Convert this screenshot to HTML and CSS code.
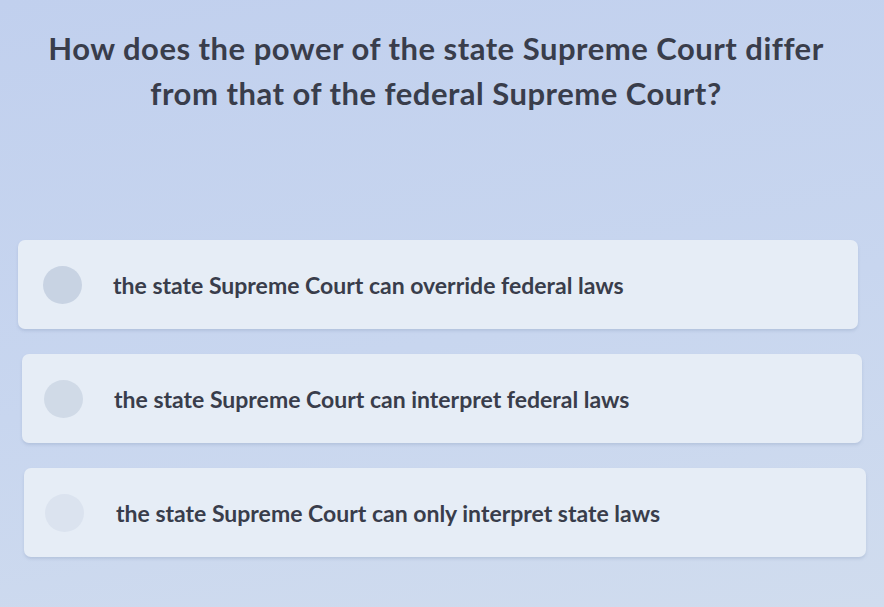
FILE: index.html
```html
<!DOCTYPE html>
<html>
<head>
<meta charset="UTF-8">
<title>Question</title>
<link rel="stylesheet" href="styles.css">
</head>
<body>
	<div class="page">
		<div class="question">
			<h1>How does the power of the state Supreme Court differ<br>from that of the federal Supreme Court?</h1>
		</div>
		<div class="answers">
			<div class="answer a1"><span class="radio"></span><span class="label">the state Supreme Court can override federal laws</span></div>
			<div class="answer a2"><span class="radio"></span><span class="label">the state Supreme Court can interpret federal laws</span></div>
			<div class="answer a3"><span class="radio"></span><span class="label">the state Supreme Court can only interpret state laws</span></div>
		</div>
	</div>
</body>
</html>
```
FILE: styles.css
```css
html, body {
	margin: 0;
	height: 100%;
}

body {
	background: linear-gradient(170deg, #c1d0ee 0%, #c8d6ef 55%, #d0dcee 100%);
	font-family: "Lato", "Open Sans", sans-serif;
	color: #393d4b;
	overflow: hidden;
}

.page {
	height: 607px;
	display: flex;
	flex-direction: column;
}

.question {
	height: 240px;
	text-align: center;
}

.question h1 {
	margin: 0;
	padding: 26px 12px 0 0;
	font-size: 31px;
	font-weight: 700;
	line-height: 45px;
	letter-spacing: 0.5px;
}

.answers {
	display: flex;
	flex-direction: column;
	gap: 25px;
}

.answer {
	height: 89px;
	background-color: #e6edf6;
	border-radius: 7px;
	display: flex;
	align-items: center;
	box-shadow: 0 2px 3px rgba(120, 140, 175, 0.25);
}

.a1 {
	margin: 0 26px 0 18px;
}

.a2 {
	margin: 0 22px 0 22px;
}

.a3 {
	margin: 0 18px 0 24px;
}

.radio {
	width: 39px;
	height: 38px;
	border-radius: 50%;
	background-color: #c8d3e3;
	margin-left: 25px;
	margin-right: 31px;
	flex-shrink: 0;
}

.a2 .radio {
	background-color: #d0dae7;
	margin-left: 22px;
}

.a3 .radio {
	background-color: #dbe3ef;
	margin-left: 21px;
	margin-right: 32px;
}

.label {
	font-size: 23px;
	font-weight: 700;
}
```
